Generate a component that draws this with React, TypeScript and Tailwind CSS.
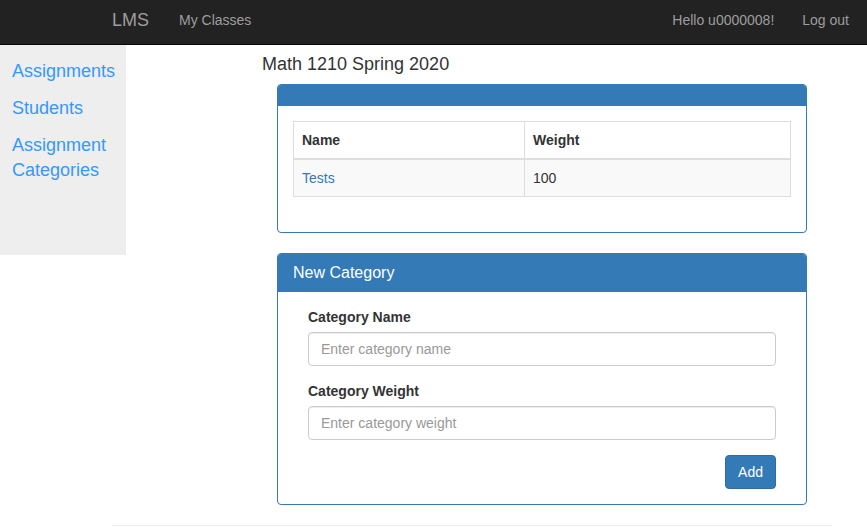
import React from "react";

export default function App() {
  return (
    <div className="min-h-screen bg-white font-['Liberation_Sans',Arial,sans-serif] text-[14px] leading-5 text-[#333]">
      <nav className="h-[45px] bg-[#222] border-b border-[#080808]">
        <div className="flex pl-[112px] pr-[18px] pt-[10px] leading-5 text-[#9d9d9d]">
          <span className="text-[18px]">LMS</span>
          <span className="ml-[30px]">My Classes</span>
          <span className="ml-auto">Hello u0000008!</span>
          <span className="ml-[28px]">Log out</span>
        </div>
      </nav>
      <div className="flex items-start">
        <aside className="w-[126px] h-[210px] shrink-0 bg-[#eee] pl-[12px] pr-[4px] pt-[14px] flex flex-col gap-[12px] text-[18px] leading-[25px] text-[#3399ff]">
          <a>Assignments</a>
          <a>Students</a>
          <a>Assignment Categories</a>
        </aside>
        <main className="ml-[136px]">
          <h4 className="mt-[7px] mb-[7px] text-[18px] leading-[25px] text-[#333] font-normal">
            Math 1210 Spring 2020
          </h4>
          <div className="ml-[15px] w-[530px]">
            <div className="border border-[#337ab7] rounded-[4px]">
              <div className="h-[21px] bg-[#337ab7] border-b border-[#337ab7] rounded-t-[3px]" />
              <div className="p-[15px]">
                <table className="w-full border-collapse border border-[#ddd] mb-[20px]">
                  <thead>
                    <tr>
                      <th className="w-[231px] text-left font-bold px-[8px] py-[8px] border border-[#ddd] border-b-2">Name</th>
                      <th className="text-left font-bold px-[8px] py-[8px] border border-[#ddd] border-b-2">Weight</th>
                    </tr>
                  </thead>
                  <tbody>
                    <tr className="bg-[#f9f9f9]">
                      <td className="px-[8px] py-[8px] border border-[#ddd] text-[#337ab7]">Tests</td>
                      <td className="px-[8px] py-[8px] border border-[#ddd]">100</td>
                    </tr>
                  </tbody>
                </table>
              </div>
            </div>

            <div className="mt-[20px] border border-[#337ab7] rounded-[4px]">
              <div className="bg-[#337ab7] border-b border-[#337ab7] rounded-t-[3px] px-[15px] py-[10px] text-[16px] leading-[17px] text-white">
                New Category
              </div>
              <div className="p-[15px]">
                <div className="px-[15px]">
                  <div className="mb-[15px]">
                    <label className="block font-bold mb-[5px]">Category Name</label>
                    <input
                      className="block w-full h-[34px] px-[12px] border border-[#ccc] rounded-[4px] text-[14px] text-[#555] placeholder:text-[#999] shadow-[inset_0_1px_1px_rgba(0,0,0,0.075)] outline-none"
                      placeholder="Enter category name"
                    />
                  </div>
                  <div className="mb-[15px]">
                    <label className="block font-bold mb-[5px]">Category Weight</label>
                    <input
                      className="block w-full h-[34px] px-[12px] border border-[#ccc] rounded-[4px] text-[14px] text-[#555] placeholder:text-[#999] shadow-[inset_0_1px_1px_rgba(0,0,0,0.075)] outline-none"
                      placeholder="Enter category weight"
                    />
                  </div>
                  <div className="flex justify-end">
                    <button className="h-[34px] px-[12px] bg-[#337ab7] border border-[#2e6da4] rounded-[4px] text-white text-[14px] leading-5">
                      Add
                    </button>
                  </div>
                </div>
              </div>
            </div>
          </div>
        </main>
      </div>
      <hr className="mt-[20px] ml-[112px] w-[720px] border-0 border-t border-[#eee]" />
    </div>
  );
}
